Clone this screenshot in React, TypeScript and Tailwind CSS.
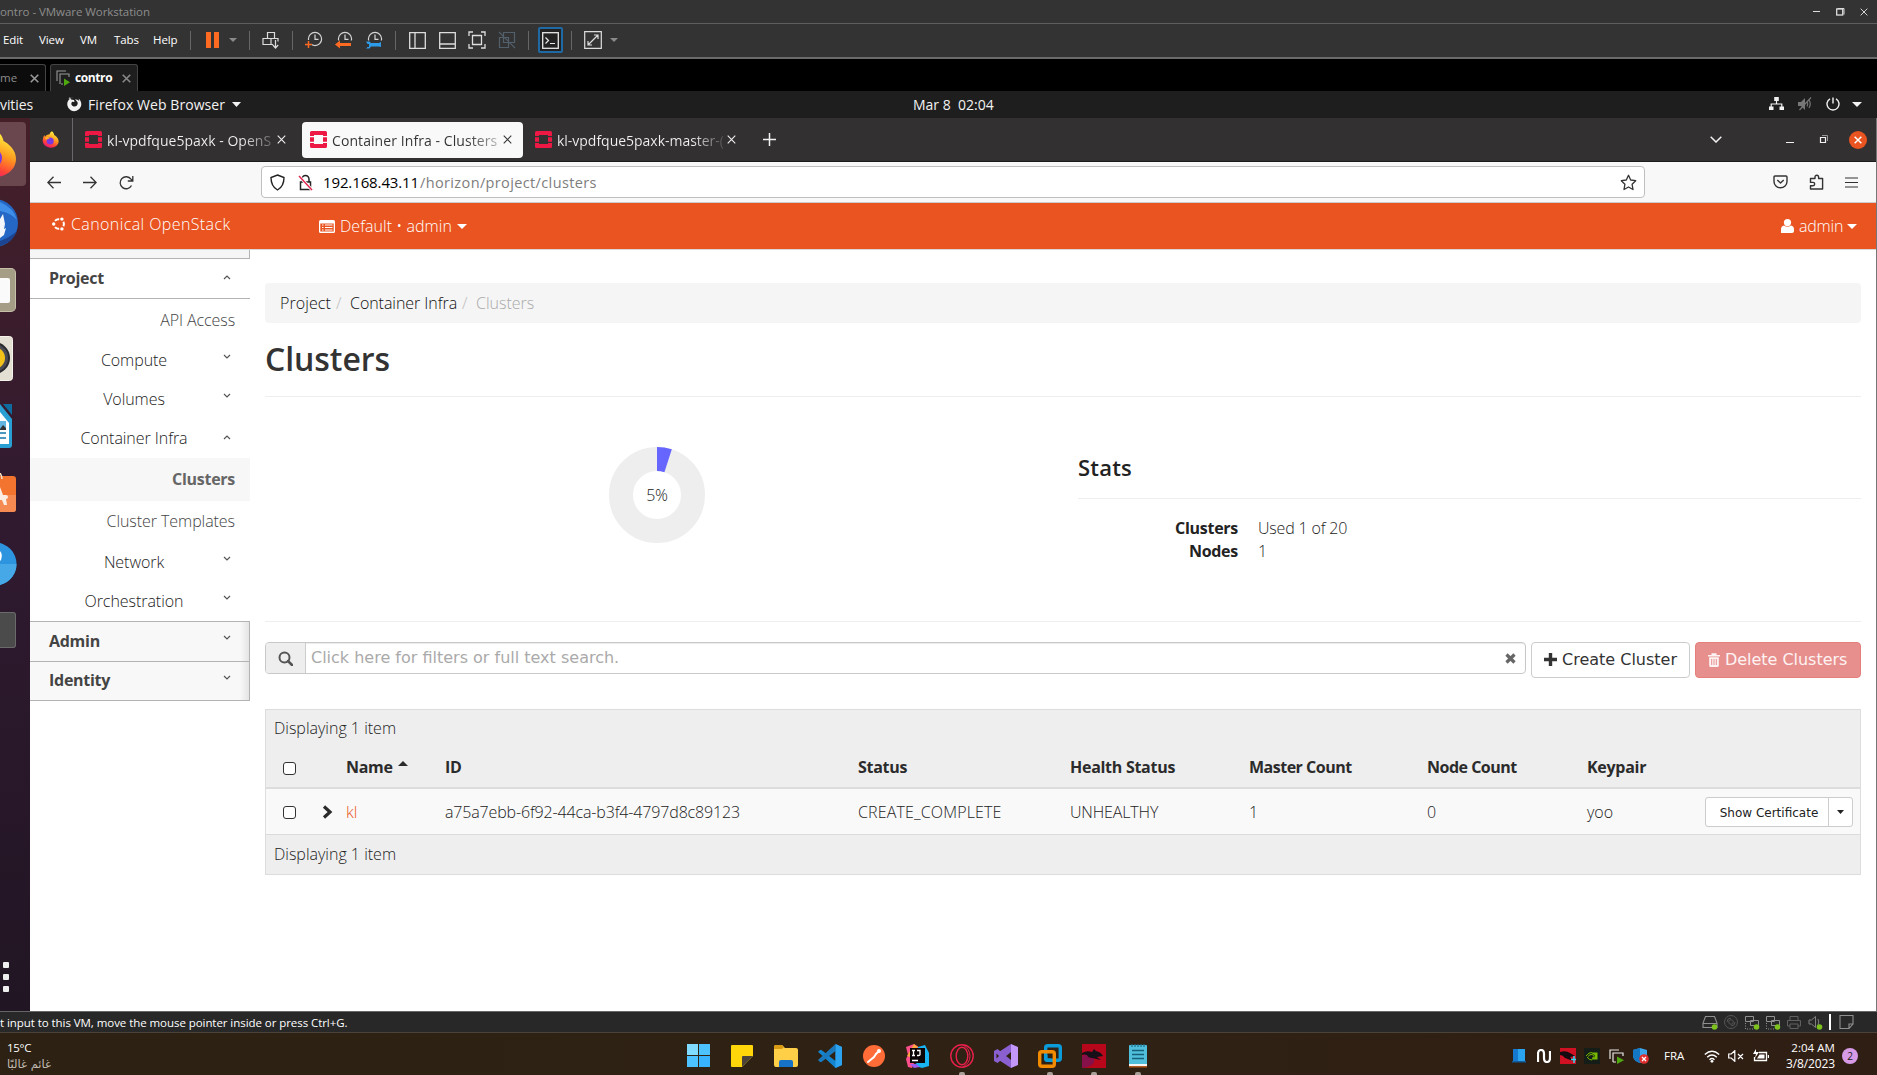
import React from "react";

type P = { children?: React.ReactNode; className?: string };

const Svg = ({ w = 18, h = w, vb, className = "", children }: P & { w?: number; h?: number; vb?: string }) => (
  <svg width={w} height={h} viewBox={vb ?? `0 0 ${w} ${h}`} fill="none" className={"block shrink-0 " + className}>
    {children}
  </svg>
);

const Sep = ({ className = "" }: P) => <div className={"h-[19px] w-px shrink-0 bg-[#666] " + className} />;

const Cell = ({ className = "", children }: P) => (
  <div className={"flex shrink-0 items-center justify-center " + className}>{children}</div>
);

const Caret = ({ w = 8, h = 4, className = "" }: { w?: number; h?: number; className?: string }) => (
  <svg width={w} height={h} viewBox="0 0 8 4" preserveAspectRatio="none" className={"block shrink-0 " + className}>
    <path d="M0 0h8L4 4z" fill="currentColor" />
  </svg>
);

const Close = ({ w = 9, sw = 1.2, className = "" }: { w?: number; sw?: number; className?: string }) => (
  <svg width={w} height={w} viewBox="0 0 10 10" className={"block shrink-0 " + className}>
    <path d="M.8.8l8.4 8.4M9.2.8L.8 9.2" stroke="currentColor" strokeWidth={sw} />
  </svg>
);

const Clock = ({ children }: P) => (
  <Svg w={18} h={18}>
    <circle cx="10" cy="8" r="6.6" stroke="#d6d6d6" strokeWidth="1.2" />
    <path d="M10 3.5V8.3h3.5" stroke="#d6d6d6" strokeWidth="1.2" />
    {children}
  </Svg>
);

function TitleBar() {
  return (
    <div className="flex h-[24px] items-center border-b border-[#5e5e5e] bg-[#333]">
      <span className="w-[1802px] shrink-0 text-[11.5px] tracking-[-0.05px] text-[#8d8d8d]">ontro - VMware Workstation</span>
      <Cell className="w-[28px]"><div className="h-px w-[7px] bg-[#ddd]" /></Cell>
      <Cell className="w-[20px]">
        <Svg w={9}><path d="M1.5 1.5h6.5v6" stroke="#ddd" /><rect x=".7" y="2" width="6" height="6" stroke="#ddd" strokeWidth="1.3" /></Svg>
      </Cell>
      <Cell className="w-[28px]"><Close w={8} className="text-[#ddd]" /></Cell>
    </div>
  );
}

function MenuBar() {
  return (
    <div className="flex h-[35px] items-center border-b-2 border-[#6b6b6b] bg-[#333] pb-px">
      <div className="flex w-[190px] shrink-0 text-[11.5px] tracking-[-0.1px] text-white">
        <span className="w-[36px] pl-[3px]">Edit</span>
        <span className="w-[41px] pl-[3px]">View</span>
        <span className="w-[34px] pl-[3px]">VM</span>
        <span className="w-[39px] pl-[3px]">Tabs</span>
        <span className="pl-[3px]">Help</span>
      </div>
      <Sep />
      <Cell className="w-[42px]"><div className="flex gap-[3px]"><div className="h-[16px] w-[5px] bg-[#fd6a22]" /><div className="h-[16px] w-[5px] bg-[#fd6a22]" /></div></Cell>
      <Cell className="w-[16px] pr-[16px]"><Caret className="text-[#8a8a8a]" /></Cell>
      <Sep />
      <Cell className="w-[42px]">
        <Svg w={18}><path d="M5.500 1.500h7v6h-7zM1 7.500h8v6H1zM9 7.500h7v3M9 13.500h2" stroke="#ddd" strokeWidth="1.200" /><path d="M13.500 9v8M10.800 14l2.700 3 2.700-3" stroke="#ddd" strokeWidth="1.200" /></Svg>
      </Cell>
      <Sep />
      <Cell className="w-[42px]"><Clock><rect x="0" y="9" width="7" height="9" fill="#333" /><path d="M3.500 10v7M0 13.500h7" stroke="#fd6a22" strokeWidth="1.500" /></Clock></Cell>
      <Cell className="w-[18px]"><Clock><rect x="0" y="9.500" width="18" height="9" fill="#333" /><path d="M0 13.500l5-4v2.500h11v3H5v2.500z" fill="#fd6a22" /></Clock></Cell>
      <Cell className="w-[42px]"><Clock><rect x="0" y="9.500" width="18" height="9" fill="#333" /><path d="M1 10.500h3.500L6 12h8l2-1v5l-2-.5H6L4.500 17.500H1l1.500-1.500h1.500v-3H2.500z" fill="#2d9be8" /></Clock></Cell>
      <Sep />
      <Cell className="w-[42px]"><Svg w={17}><path d="M.7.7h15.600v15.600H.7zM6 .7v15.600" stroke="#ddd" strokeWidth="1.300" /></Svg></Cell>
      <Cell className="w-[18px]"><Svg w={17}><path d="M.7.7h15.600v15.600H.7zM.7 12h15.600" stroke="#ddd" strokeWidth="1.300" /></Svg></Cell>
      <Cell className="w-[42px]"><Svg w={18}><path d="M1 5V1h4M13 1h4v4M17 13v4h-4M5 17H1v-4M4.500 4.500h9v9h-9z" stroke="#ddd" strokeWidth="1.300" /></Svg></Cell>
      <Cell className="w-[18px]"><Svg w={18}><path d="M5.500 1.500h11v10h-11zM1.500 6.500h9v10h-9zM1 1l16 16" stroke="#52606b" strokeWidth="1.200" /></Svg></Cell>
      <div className="w-[12px] shrink-0" />
      <Sep />
      <Cell className="w-[42px]">
        <div className="flex h-[26px] w-[25px] items-center justify-center rounded-[2px] border-2 border-[#1f6aa5] bg-[#222]">
          <Svg w={17}><rect x=".7" y=".7" width="15.600" height="15.600" stroke="#e8e8e8" strokeWidth="1.300" /><path d="M3.500 5.500l3 3-3 3M8 11.500h5" stroke="#e8e8e8" strokeWidth="1.200" /></Svg>
        </div>
      </Cell>
      <Sep />
      <Cell className="w-[42px]"><Svg w={18}><path d="M.7.7h16.600v16.600H.7zM4 14L14 4M10 4h4v4M4 10v4h4" stroke="#ddd" strokeWidth="1.200" /></Svg></Cell>
      <Caret className="ml-[-4px] text-[#8a8a8a]" />
    </div>
  );
}

function VmTabs() {
  return (
    <div className="flex h-[32px] items-end bg-black">
      <div className="flex h-[27px] w-[46px] shrink-0 items-center justify-between rounded-tr-[3px] border-t border-r border-[#444] bg-[#0c0c0c] pr-[6px]">
        <span className="text-[11.5px] text-[#8d8d8d]">me</span>
        <Close w={9} sw={1.8} className="text-[#999]" />
      </div>
      <div className="ml-[4px] flex h-[27px] w-[88px] shrink-0 items-center rounded-t-[3px] border border-b-0 border-[#444] bg-[#1e1e1e] pl-[5px]">
        <Svg w={15} h={16}><path d="M1 11V1h9M4 14V4h9v3M5 14h2" stroke="#999" strokeWidth="1.100" /><path d="M8 8.500l6 3.700-6 3.700z" fill="#4ea80f" /></Svg>
        <span className="ml-[4px] w-[47px] text-[12px] font-bold tracking-[-0.4px] text-white">contro</span>
        <Close w={9} sw={1.8} className="text-[#888]" />
      </div>
    </div>
  );
}

function GnomeBar() {
  return (
    <div className="flex h-[27px] items-center bg-[#1e1e1e] pb-px text-[14px] text-[#f2f2f2]">
      <span className="w-[66px] shrink-0 tracking-[-0.1px]">vities</span>
      <Svg w={16} h={16}>
        <path d="M8 1.200A7 7 0 1 0 14.500 5c-.4-1.200-1.200-2-2-2.500.5 1 .7 1.800.7 2.600C12 3.500 10.500 3.600 9 3.300L11 5.500c1 1 1 3-.3 4.200-1.500 1.300-4 1-5-.7-.7-1.300-.3-2.600.6-3.300L8.500 6 8 4 5 3.500 4 1 2.500 3z" fill="#f2f2f2" />
      </Svg>
      <span className="ml-[6px] w-[144px] shrink-0 tracking-[0.07px]">Firefox Web Browser</span>
      <Caret w={9} h={5} />
      <span className="ml-[672px] w-[856px] shrink-0 whitespace-pre text-[14px]">Mar 8  02:04</span>
      <Svg w={15} h={14}><path d="M5.200 0h4.600v4H5.200zM0 9.500h4.500V13H0zM10.500 9.500H15V13h-4.500z" fill="#f2f2f2" /><path d="M7.500 4v3M2.200 10V7h10.600v3" stroke="#f2f2f2" strokeWidth="1.200" /></Svg>
      <Svg w={15} h={14} className="ml-[14px]"><path d="M0 5h3l4-4v12L3 9H0z" fill="#777" /><path d="M9 4.500q1.500 2.500 0 5M11 3q2.500 4 0 8M1.500 13L13 .5" stroke="#777" strokeWidth="1.200" /></Svg>
      <Svg w={14} h={14} className="ml-[13px]"><path d="M7 .5v6M4 1.800a6 6 0 1 0 6 0" stroke="#f2f2f2" strokeWidth="1.400" /></Svg>
      <Caret w={10} h={5} className="ml-[12px]" />
    </div>
  );
}

const OpenStack = () => (
  <Svg w={17} h={17}>
    <path d="M0 1.500Q0 0 1.500 0h14Q17 0 17 1.500V5h-4V4H4v1H0zM0 12h4v1h9v-1h4v3.500q0 1.500-1.500 1.500h-14Q0 17 0 15.500z" fill="#ed1944" />
    <path d="M0 6.200h4v4.600H0zM13 6.200h4v4.600h-4z" fill="#ed1944" />
  </Svg>
);

const Firefox = ({ s, className = "" }: { s: number; className?: string }) => (
  <svg width={s} height={s} viewBox="0 0 48 48" className={"block shrink-0 " + className}>
    <defs>
      <linearGradient id="flame" x1="0.75" y1="0" x2="0.3" y2="1">
        <stop offset="0.1" stopColor="#ffe83d" />
        <stop offset="0.45" stopColor="#ff9a1f" />
        <stop offset="0.75" stopColor="#ff4139" />
        <stop offset="1" stopColor="#e8117f" />
      </linearGradient>
    </defs>
    <path d="M28 1c4 3 6 7 6.500 10C40 14 47 20 47 29c0 10-9 18-22 18S2 38 2 27C2 20 4 15 7 11c0 2 1 4 2 5 3-5 7-6 12-6 1-4 4-7 7-9z" fill="url(#flame)" />
    <circle cx="23" cy="28" r="10" fill="#7a38e0" />
    <path d="M9 18c5-2 10 0 13 3-6 0-7 3-9 4-3-1-4-4-4-7z" fill="#ffb02a" />
  </svg>
);

function FirefoxTabs() {
  return (
    <div className="flex h-[44px] items-center border-b border-[#1c1b1c] bg-[#333032] text-[14px] text-[#f2f2f2]">
      <Cell className="h-full w-[43px] border-r border-[#6a686a]"><Firefox s={17} className="mr-[2px]" /></Cell>
      <div className="flex w-[229px] shrink-0 items-center pl-[12px]">
        <OpenStack />
        <span className="mt-px ml-[5px] w-[168px] whitespace-nowrap bg-gradient-to-r from-[#f2f2f2] from-80% to-[#5a5759] bg-clip-text tracking-[0.02px] text-transparent">kl-vpdfque5paxk - OpenS</span>
        <Close w={9} className="ml-[2px]" />
      </div>
      <div className="flex h-[36px] w-[221px] shrink-0 items-center rounded-[4px] bg-[#f9f9fa] pl-[8px] text-[#333]">
        <OpenStack />
        <span className="mt-px ml-[5px] w-[167px] whitespace-nowrap bg-gradient-to-r from-[#333] from-80% to-[#bbb] bg-clip-text tracking-[0.08px] text-transparent">Container Infra - Clusters</span>
        <Close w={9} className="ml-[4px]" />
      </div>
      <div className="flex w-[230px] shrink-0 items-center pl-[12px]">
        <OpenStack />
        <span className="mt-px ml-[5px] w-[170px] whitespace-nowrap bg-gradient-to-r from-[#f2f2f2] from-80% to-[#403d3f] bg-clip-text tracking-[-0.02px] text-transparent">kl-vpdfque5paxk-master-(</span>
        <Close w={9} />
      </div>
      <Svg w={13} className="ml-[10px]"><path d="M6.500 0v13M0 6.500h13" stroke="#f2f2f2" strokeWidth="1.500" /></Svg>
      <Svg w={12} h={7} className="ml-[934px]"><path d="M.7.700L6 6 11.300.7" stroke="#f2f2f2" strokeWidth="1.500" /></Svg>
      <div className="mt-[6px] ml-[64px] h-px w-[8px] bg-[#f2f2f2]" />
      <Svg w={9} className="ml-[25px]"><path d="M1.500 2.500h5v5h-5z" stroke="#f2f2f2" strokeWidth="1.200" /><path d="M3 .5h5.500V6" stroke="#999" /></Svg>
      <div className="ml-[21px] flex h-[18px] w-[18px] items-center justify-center rounded-full bg-[#e95420]"><Close w={8} sw={1.800} className="text-white" /></div>
    </div>
  );
}

function UrlBar() {
  return (
    <div className="flex h-[41px] items-center border-b border-[#ccc] bg-[#f8f8f8] text-[#333]">
      <Svg w={14} h={13} className="ml-[17px]"><path d="M14 6.500H1M6.500.8L.8 6.500l5.700 5.700" stroke="#333" strokeWidth="1.300" /></Svg>
      <Svg w={14} h={13} className="ml-[22px]"><path d="M0 6.500h13M7.500.8l5.700 5.700-5.700 5.700" stroke="#333" strokeWidth="1.300" /></Svg>
      <Svg w={15} h={15} className="ml-[22px]"><path d="M12.500 10.500A6 6 0 1 1 12 4.200L13.500 6M13.800 1v5h-5" stroke="#333" strokeWidth="1.300" /></Svg>
      <div className="ml-[127px] flex h-[32px] w-[1384px] shrink-0 items-center rounded-[4px] border border-[#bfbfbf] bg-white pl-[8px]">
        <Svg w={15} h={17}><path d="M7.500 1l6.500 2.500c0 6-2 10-6.500 12.500C3 13.500 1 9.500 1 3.500z" stroke="#222" strokeWidth="1.400" /></Svg>
        <Svg w={15} h={17} className="ml-[13px]"><path d="M4 8V5a3.500 3.500 0 0 1 7 0v3M2.500 8h10v7.500h-10z" stroke="#222" strokeWidth="1.500" /><path d="M1 2l13 14" stroke="#fff" strokeWidth="3" /><path d="M1 2l13 14" stroke="#e22850" strokeWidth="1.500" /></Svg>
        <span className="mt-px ml-[10px] w-[97px] text-[15px] tracking-[-0.12px] text-black">192.168.43.11</span>
        <span className="mt-px w-[1200px] text-[14.500px] tracking-[0.37px] text-[#7d7d7d]">/horizon/project/clusters</span>
        <Svg w={17} h={17}><path d="M8.500 1.300l2.200 4.700 5 .7-3.600 3.600.9 5.200-4.500-2.500L4 15.500l.9-5.200L1.300 6.700l5-.7z" stroke="#333" strokeWidth="1.300" strokeLinejoin="round" /></Svg>
      </div>
      <Svg w={15} h={14} className="ml-[128px]"><path d="M2 1h11q1 0 1 1v4.500a6.500 6.300 0 0 1-13 0V2q0-1 1-1zM4.300 5L7.500 8l3.200-3" stroke="#333" strokeWidth="1.400" strokeLinejoin="round" /></Svg>
      <Svg w={15} h={16} className="ml-[21px]"><path d="M1.500 4.500H6V3a1.800 1.800 0 0 1 3.600 0v1.500h4V15H1.500v-3.200H4a1.700 1.700 0 0 0 0-3.400H1.500z" stroke="#333" strokeWidth="1.400" strokeLinejoin="round" /></Svg>
      <Svg w={13} h={11} className="ml-[21px]"><path d="M0 1h13M0 5.500h13M0 10h13" stroke="#333" strokeWidth="1.200" /></Svg>
    </div>
  );
}

function HorizonHeader() {
  return (
    <div className="flex h-[47px] items-center border-b border-[#d8d8d8] bg-[#e95420] text-[16px] font-light text-white">
      <Svg w={14} h={14} className="mt-[-4px] ml-[22px]">
        <path d="M3 3.800A5 5 0 0 1 7.200 2.200M11.400 4.800a5 5 0 0 1 0 4.400M7.200 11.800A5 5 0 0 1 3 10.200" stroke="#fff" strokeWidth="2" />
        <circle cx="9.900" cy="2.100" r="1.700" fill="#fff" /><circle cx="1.700" cy="7" r="1.700" fill="#fff" /><circle cx="9.900" cy="11.900" r="1.700" fill="#fff" />
      </Svg>
      <span className="mt-[-4px] ml-[5px] w-[248px] shrink-0 tracking-[0.4px]">Canonical OpenStack</span>
      <Svg w={16} h={13}><path d="M1.500 0h13Q16 0 16 1.500v10q0 1.500-1.500 1.500h-13Q0 13 0 11.500v-10Q0 0 1.500 0zM1.300 3.500v8h13.400v-8z" fill="#fff" fillRule="evenodd" /><path d="M3 5h1.500M6 5h7.500M3 7.500h1.500M6 7.500h7.500M3 10h1.500M6 10h7.500" stroke="#fff" strokeWidth="1.200" /></Svg>
      <span className="ml-[5px] w-[117px] shrink-0 tracking-[0.04px]">Default • admin</span>
      <Caret w={10} h={5} />
      <Svg w={13} h={14} className="ml-[1314px]"><circle cx="6.500" cy="3.600" r="3.600" fill="#fff" /><path d="M0 14v-3.500Q0 7 3 6.500q3.500 2.500 7 0 3 .5 3 4V12q0 2-2 2z" fill="#fff" /></Svg>
      <span className="ml-[5px] w-[48px] shrink-0 tracking-[-0.2px]">admin</span>
      <Caret w={10} h={5} />
    </div>
  );
}

const Chevron = ({ up = false }: { up?: boolean }) => (
  <svg width="8" height="5" viewBox="0 0 8 5" fill="none" className="block shrink-0">
    <path d={up ? "M1 4l3-3 3 3" : "M1 1l3 3 3-3"} stroke="#555" strokeWidth="1.200" />
  </svg>
);

function Group({ label, up, className = "h-[40px]" }: { label: string; up?: boolean; className?: string }) {
  return (
    <div className={"flex items-center justify-between border-b border-[#b3b3b3] pl-[19px] text-[16px] font-bold tracking-[-0.27px] text-[#444] " + className + (up ? " bg-white pr-[19px]" : " border-r bg-[#f8f8f8] bg-gradient-to-l from-[#e4e4e4] via-[#f8f8f8] via-4% to-[#f8f8f8] pr-[18px]")}>
      <span className="pb-[2px]">{label}</span>
      <span className={up ? "mt-[-2px]" : "mt-[-8px]"}><Chevron up={up} /></span>
    </div>
  );
}

function SubGroup({ label, up }: { label: string; up?: boolean }) {
  return (
    <div className="flex h-[39px] items-center pr-[19px] text-[16px] font-light text-[#222]">
      <span className="w-[193px] pb-[2px] pl-[15px] text-center tracking-[-0.05px]">{label}</span>
      <span className={up ? "mt-[-2px]" : "mt-[-8px]"}><Chevron up={up} /></span>
    </div>
  );
}

function Sidebar() {
  return (
    <div className="w-[220px] shrink-0">
      <div className="h-[9px] border-r border-b border-[#b3b3b3] bg-[#f5f5f5]" />
      <Group label="Project" up />
      <div className="flex h-[42px] items-center justify-end pr-[15px] text-[16px] font-light tracking-[-0.1px] text-[#444]">API Access</div>
      <SubGroup label="Compute" />
      <SubGroup label="Volumes" />
      <SubGroup label="Container Infra" up />
      <div className="flex h-[43px] items-center justify-end bg-[#f7f7f7] pr-[15px] pb-[2px] text-[16px] font-bold tracking-[-0.27px] text-[#666]">Clusters</div>
      <div className="flex h-[42px] items-center justify-end pr-[15px] pb-[2px] text-[16px] font-light tracking-[-0.06px] text-[#444]">Cluster Templates</div>
      <SubGroup label="Network" />
      <SubGroup label="Orchestration" />
      <div className="border-t border-[#b3b3b3]">
        <Group label="Admin" />
        <Group label="Identity" className="h-[39px]" />
      </div>
    </div>
  );
}

const cols = "grid grid-cols-[80px_99px_413px_212px_179px_178px_160px_1fr]";

const Box = () => <span className="block h-[13px] w-[13px] rounded-[3px] border-[1.500px] border-[#333] bg-white" />;

function Table() {
  return (
    <div className="mt-[31px] border border-[#ddd] bg-[#eee] text-[16px] font-light text-[#222]">
      <div className="flex h-[38px] items-center pb-[2px] pl-[8px]">Displaying 1 item</div>
      <div className={cols + " h-[41px] items-center border-b-2 border-[#dcdcdc] pb-px font-bold tracking-[-0.28px] text-[#2b2b2b]"}>
        <span className="pt-[3px] pl-[17px]"><Box /></span>
        <span className="flex items-center gap-[5px]">Name <svg width="10" height="5" viewBox="0 0 10 5" className="mt-[-7px]"><path d="M0 5h10L5 0z" fill="#2b2b2b" /></svg></span>
        <span>ID</span>
        <span>Status</span>
        <span>Health Status</span>
        <span className="tracking-[-0.5px]">Master Count</span>
        <span className="tracking-[-0.5px]">Node Count</span>
        <span>Keypair</span>
      </div>
      <div className={cols + " h-[46px] items-center border-b border-[#dcdcdc] bg-[#f9f9f9]"}>
        <span className="flex items-center gap-[26px] pl-[17px]">
          <span className="mt-[2px]"><Box /></span>
          <Svg w={11} h={14}><path d="M2 1.500L8 7l-6 5.500" stroke="#2b2b2b" strokeWidth="3.200" /></Svg>
        </span>
        <span className="text-[#e95420]">kl</span>
        <span className="tracking-[-0.15px]">a75a7ebb-6f92-44ca-b3f4-4797d8c89123</span>
        <span className="tracking-[0.15px]">CREATE_COMPLETE</span>
        <span className="tracking-[-0.15px]">UNHEALTHY</span>
        <span>1</span>
        <span>0</span>
        <span className="flex items-center">yoo</span>
      </div>
      <div className="flex h-[39px] items-center pb-[2px] pl-[8px]">Displaying 1 item</div>
    </div>
  );
}

function Main() {
  return (
    <div className="ml-[15px] w-[1596px] shrink-0 pt-[33px] text-[16px] font-light text-[#222]">
      <div className="flex h-[40px] items-center rounded-[4px] bg-[#f5f5f5] pl-[15px]">
        <span className="w-[56px] tracking-[0.1px] text-[#111]">Project</span>
        <span className="w-[14px] text-[#bbb]">/</span>
        <span className="w-[112px] tracking-[-0.05px] text-[#111]">Container Infra</span>
        <span className="w-[14px] text-[#bbb]">/</span>
        <span className="text-[#aaa]">Clusters</span>
      </div>
      <div className="flex h-[74px] items-center border-b border-[#eee] pb-[2px]">
        <h1 className="text-[32px] font-semibold tracking-[-0.06px] text-[#333]">Clusters</h1>
      </div>
      <div className="flex h-[225px] border-b border-[#eee]">
        <div className="w-[813px] shrink-0 pt-[50px] pl-[343px]">
          <div className="grid h-[96px] w-[98px] place-items-center">
            <Svg w={96} className="col-start-1 row-start-1">
              <circle cx="48" cy="48" r="36" stroke="#eee" strokeWidth="24" />
              <path d="M48 0A48 48 0 0 1 62.830 2.350L55.420 25.170A24 24 0 0 0 48 24z" fill="#66f" />
            </Svg>
            <span className="col-start-1 row-start-1 text-[16px] tracking-[-0.2px]">5%</span>
          </div>
        </div>
        <div className="flex-1 pt-[43px]">
          <div className="flex h-[59px] items-center border-b border-[#eee] pb-[4px] text-[22px] font-semibold tracking-[0.2px]">Stats</div>
          <div className="grid grid-cols-[160px_1fr] gap-x-[20px] pt-[18px] leading-[23px]">
            <span className="text-right font-bold tracking-[-0.27px]">Clusters</span>
            <span className="tracking-[-0.18px]">Used 1 of 20</span>
            <span className="text-right font-bold tracking-[-0.27px]">Nodes</span>
            <span>1</span>
          </div>
        </div>
      </div>
      <div className="mt-[20px] flex h-[36px] items-start font-['DejaVu_Sans',sans-serif] font-normal text-[#333]">
        <div className="flex h-[32px] w-[1261px] shrink-0 items-center overflow-hidden rounded-[4px] border border-[#c8c8c8] bg-white shadow-[inset_0_1px_1px_rgba(0,0,0,.08)]">
          <div className="flex h-full w-[40px] shrink-0 items-center justify-center border-r border-[#ccc] bg-[#eee]">
            <Svg w={15} h={15}><circle cx="6.500" cy="6.500" r="5" stroke="#555" strokeWidth="2" /><path d="M10 10l4 4" stroke="#555" strokeWidth="2.500" strokeLinecap="round" /></Svg>
          </div>
          <span className="w-[1199px] shrink-0 pl-[5px] text-[16px] text-[#aaa]">Click here for filters or full text search.</span>
          <Svg w={11} h={11}><path d="M1.500 1.500l8 8M9.500 1.500l-8 8" stroke="#666" strokeWidth="3.200" /></Svg>
        </div>
        <div className="ml-[5px] flex h-[36px] w-[159px] shrink-0 items-center rounded-[4px] border border-[#ccc] bg-white pl-[12px] text-[#333]">
          <Svg w={13} className="mt-[-2px]"><path d="M6.500 0v13M0 6.500h13" stroke="#333" strokeWidth="3.400" /></Svg>
          <span className="ml-[5px] whitespace-nowrap pb-px">Create Cluster</span>
        </div>
        <div className="ml-[5px] flex h-[36px] w-[166px] shrink-0 items-center rounded-[4px] border border-[#e57f7c] bg-[#e78f8d] pl-[12px] text-[#fdf3f3]">
          <Svg w={12} h={14}><path d="M0 2h12v1.500H0zM3.500 .3h5V2h-5zM1.200 4.200h9.600V12.500q0 1.500-1.500 1.500H2.700q-1.500 0-1.500-1.500z" fill="#fdf3f3" /><path d="M3.700 6v6M6 6v6M8.300 6v6" stroke="#e78f8d" strokeWidth="1" /></Svg>
          <span className="ml-[5px] whitespace-nowrap pb-px tracking-[-0.03px]">Delete Clusters</span>
        </div>
      </div>
      <div className="relative">
        <Table />
        <div className="absolute top-[88px] right-[8px] flex h-[30px] w-[148px] rounded-[3px] border border-[#ccc] bg-white font-['DejaVu_Sans',sans-serif] text-[12px] font-normal">
          <span className="flex w-[123px] items-center justify-center border-r border-[#ccc] pt-px pl-[4px]">Show Certificate</span>
          <span className="flex flex-1 items-center justify-center"><Caret w={7} h={4} /></span>
        </div>
      </div>
    </div>
  );
}

const DockCell = ({ className = "", children }: P) => <div className={"flex shrink-0 items-center overflow-hidden " + className}>{children}</div>;

function Dock() {
  return (
    <div className="flex w-[30px] shrink-0 flex-col overflow-hidden bg-gradient-to-b from-[#451f28] via-[#301a30] via-45% to-[#211523]">
      <DockCell className="mt-[4px] h-[64px] w-[26px] rounded-r-[4px] bg-[#6a474f]"><Firefox s={48} className="ml-[-31px]" /></DockCell>
      <DockCell className="mt-[12px] h-[50px]">
        <Svg w={20} h={48}><circle cx="-6" cy="24" r="24" fill="#2467c4" /><path d="M0 3q14 6 17 18-6-7-17-9z" fill="#3f8fe8" /><path d="M0 20l3-5 1 5 1 5-1 5 2-1-2 7-4 3z" fill="#f3f6fa" /><path d="M17 32q-5 12-17 15v-5q9-3 17-10z" fill="#1c4490" /></Svg>
      </DockCell>
      <DockCell className="mt-[20px] h-[44px]"><div className="flex h-[44px] w-[16px] items-center rounded-r-[5px] border border-l-0 border-[#c6bfa9] bg-[#a59d86]"><div className="h-[25px] w-[10px] rounded-r-[2px] bg-[#fafafa]" /></div></DockCell>
      <DockCell className="mt-[24px] h-[45px]">
        <Svg w={14} h={45}><rect x="-20" y=".5" width="32.500" height="44" rx="3" fill="#e3dfd3" stroke="#f5f3ec" /><circle cx="-6" cy="22" r="16" fill="#29292e" /><circle cx="-6" cy="22" r="14" fill="#4a4a55" /><circle cx="-6" cy="22" r="11" fill="#f2c218" /></Svg>
      </DockCell>
      <DockCell className="mt-[23px] h-[45px]">
        <Svg w={14} h={45}><path d="M0 0l12 15v26q0 3-3 3H0z" fill="#2a9fd4" /><path d="M3 0h9v11z" fill="#0e6c9e" /><path d="M0 8l9 11v21H0z" fill="#fff" /><path d="M0 17h6v9H0z" fill="#62b5e0" /><path d="M0 25l3-4 3 3v2H0z" fill="#333" /><path d="M0 29h6M0 34h6" stroke="#1176a8" strokeWidth="1.500" /></Svg>
      </DockCell>
      <DockCell className="mt-[24px] h-[42px]">
        <Svg w={17} h={42}><path d="M0 3h13q3 0 3 3v30q0 3-3 3H0z" fill="#f3742f" /><path d="M0 22h16v14q0 3-3 3H0z" fill="#f58a52" /><path d="M0 0q2 3 2 6" stroke="#fbe3c8" strokeWidth="1.500" /><path d="M0 14l3 8h3q2 0 2 2t-2 2l1 6H4l-2-5H0z" fill="#fdeee4" /></Svg>
      </DockCell>
      <DockCell className="mt-[27px] h-[44px]"><Svg w={17} h={44}><circle cx="-5" cy="22" r="21.500" fill="#2d94df" /><path d="M0 22h16.500a21.500 21.500 0 0 1-16.500 21z" fill="#47a8e8" /><path d="M0 9q3 3 1 9l-1 1z" fill="#fff" /></Svg></DockCell>
      <DockCell className="mt-[26px] h-[36px]"><div className="h-[36px] w-[16px] rounded-r-[3px] border border-l-0 border-[#6b6b6b] bg-[#4b4b4b]" /></DockCell>
      <div className="mt-auto mb-[19px] ml-[3px] flex flex-col gap-[6px]">
        <i className="block h-[6px] w-[6px] rounded-[1px] bg-[#eee]" />
        <i className="block h-[6px] w-[6px] rounded-[1px] bg-[#eee]" />
        <i className="block h-[6px] w-[6px] rounded-[1px] bg-[#eee]" />
      </div>
    </div>
  );
}

const Dot = ({ x, y }: { x: number; y: number }) => <circle cx={x} cy={y} r="2.800" fill="#7cc11c" />;

function StatusBar() {
  return (
    <div className="flex h-[22px] items-center border-t border-b border-t-[#666] border-b-[#4b423a] bg-[#282828]">
      <span className="w-[1702px] shrink-0 whitespace-nowrap pt-px text-[11.500px] tracking-[-0.06px] text-white">t input to this VM, move the mouse pointer inside or press Ctrl+G.</span>
      <div className="flex items-center gap-[5px]">
        <Svg w={16} h={16}><path d="M3.500 2.500h9L15 9v4.500H1V9zM1 9.500h14" stroke="#909090" strokeWidth="1.100" /><Dot x={12.500} y={13} /></Svg>
        <Svg w={16} h={16}><circle cx="8" cy="8" r="6.500" stroke="#555" /><circle cx="8" cy="8" r="2.300" stroke="#555" /><path d="M4 8a4 4 0 0 1 4-4M12 8a4 4 0 0 1-4 4" stroke="#555" /></Svg>
        <Svg w={16} h={16}><path d="M1.500 2.500h8v5h-8zM6.500 6.500h8v5h-8z" fill="#282828" stroke="#909090" /><path d="M1.500 9v6h8" stroke="#909090" strokeDasharray="1 1.500" /><Dot x={12.500} y={13} /></Svg>
        <Svg w={16} h={16}><path d="M1.500 2.500h8v5h-8zM6.500 6.500h8v5h-8z" fill="#282828" stroke="#909090" /><path d="M1.500 9v6h8" stroke="#909090" strokeDasharray="1 1.500" /><Dot x={12.500} y={13} /></Svg>
        <Svg w={16} h={16}><path d="M4 6V2.500h8V6M4 12H1.500V6.500h13V12H12M4 10h8v4.500H4z" stroke="#606060" /></Svg>
        <Svg w={16} h={16}><path d="M2 6h2.500l4-3.500v11L4.500 10H2zM11 5q1.500 3 0 6" stroke="#808080" /><Dot x={12.500} y={13} /></Svg>
      </div>
      <div className="ml-[6px] h-[16px] w-[2px] bg-white" />
      <Svg w={15} h={16} className="ml-[8px]"><path d="M1 1.500h13V10l-4 4.500H1zM14 10h-4v4.500" stroke="#909090" strokeWidth="1.100" /></Svg>
    </div>
  );
}

function TaskIcon({ children, run }: P & { run?: boolean }) {
  return (
    <div className="flex h-full w-[44px] shrink-0 flex-col items-center pt-[10px]">
      <div className="flex h-[25px] items-center">{children}</div>
      {run && <div className="mt-[4px] h-[3px] w-[6px] rounded-t-[2px] bg-[#a8a19a]" />}
    </div>
  );
}

function TaskBar() {
  return (
    <div className="flex h-[42px] bg-gradient-to-r from-[#2c2112] via-[#2f2214] to-[#2f1e13]">
      <div className="w-[676px] shrink-0 pt-[7px] pl-[7px] text-[11.500px] leading-[16px]">
        <div className="tracking-[-0.3px] text-white">15°C</div>
        <div className="font-['DejaVu_Sans',sans-serif] text-[11.500px] text-[#c4bdb6]"><span dir="rtl">غائم غالبًا</span></div>
      </div>
      <TaskIcon><Svg w={23}><path d="M0 0h11v11H0zM12 0h11v11H12zM0 12h11v11H0zM12 12h11v11H12z" fill="#4cc2ff" /><path d="M0 0h11v11H0z" fill="#7fdcff" /><path d="M12 12h11v11H12z" fill="#38b4ff" /></Svg></TaskIcon>
      <TaskIcon><Svg w={22}><path d="M0 1q0-1 1-1h20q1 0 1 1v10L11 22H1q-1 0-1-1z" fill="#ffd60a" /><path d="M22 11H12q-1 0-1 1v10z" fill="#4a4238" /></Svg></TaskIcon>
      <TaskIcon><Svg w={24} h={22}><path d="M0 2q0-2 2-2h6l3 3h11q2 0 2 2v15q0 2-2 2H2q-2 0-2-2z" fill="#ffcf48" /><path d="M0 4V2q0-2 2-2h6l2 2-2 2z" fill="#d99b14" /><path d="M5 22v-5q0-2 2-2h10q2 0 2 2v5z" fill="#1673c8" /></Svg></TaskIcon>
      <TaskIcon><Svg w={24}><path d="M17.500 0L24 3v18l-6.500 3L2 9.500 0 8l2-2h1.500L17.500 17z" fill="#1484d0" /><path d="M17.500 0v7L3.500 18H2l-2-2z" fill="#1a78bd" /><path d="M17.500 0L24 3v18l-6.500 3z" fill="#2ba3f0" /></Svg></TaskIcon>
      <TaskIcon><Svg w={22}><circle cx="11" cy="11" r="11" fill="#ff6c37" /><path d="M5 17l6-5 2-3 3-3" stroke="#fff" strokeWidth="2" strokeLinecap="round" /><circle cx="16" cy="6" r="2" fill="#fff" /></Svg></TaskIcon>
      <TaskIcon>
        <Svg w={24}><path d="M0 3l8-3 6 4-8 20-4-1L0 15l2-4z" fill="#fc4f8b" /><path d="M8 0l4 3-8 10-3-1z" fill="#ffa63d" /><path d="M12 3l7-2 4 8 0 13-7 2-6-2z" fill="#18b4f4" /><path d="M4 20l6 0 4 3-6 1z" fill="#9a5cf0" /><path d="M4 4h15v15H4z" fill="#0b0508" /><path d="M6 6.500h3M7.500 6.500v5M6 11.500h3M11 6.500h3v4q0 1-1.500 1H11M6 16.500h6" stroke="#fff" strokeWidth="1.300" /></Svg>
      </TaskIcon>
      <TaskIcon run><Svg w={24}><circle cx="12" cy="12" r="11.200" stroke="#e8204b" strokeWidth="1.400" /><ellipse cx="12" cy="12" rx="5.800" ry="8.800" stroke="#e8204b" strokeWidth="1.400" /><path d="M13 1q7 4 7 11t-7 11" stroke="#e8204b" /></Svg></TaskIcon>
      <TaskIcon><Svg w={24}><path d="M17 0v8L3.500 19 0 17V7l3.500-2L17 16v8L2.500 14.500v-5z" fill="#8a5fd0" /><path d="M2.500 9.500v5L5 12z" fill="#2f2214" /><path d="M17 0l7 3v18l-7 3z" fill="#c397f8" /></Svg></TaskIcon>
      <TaskIcon run><Svg w={24}><rect x="7.700" y="1.700" width="14.600" height="14.600" rx="2" stroke="#0c9bd9" strokeWidth="3.400" /><rect x="1.700" y="7.700" width="14.600" height="14.600" rx="2" stroke="#f38b00" strokeWidth="3.400" /><path d="M7.700 11v3.300q0 2 2 2H13" stroke="#0c9bd9" strokeWidth="3.400" /></Svg></TaskIcon>
      <TaskIcon run><Svg w={24}><path d="M0 0h24v24H0z" fill="#b8061b" /><path d="M0 12q10-4 12 3t-12 9z" fill="#85104a" /><path d="M0 9q5-3 10-1l2-3 2 2q5 1 7 5l-6 1 4 3-9-2q-4 0-5-3-3-1-5 0z" fill="#170f18" /></Svg></TaskIcon>
      <TaskIcon run><Svg w={18} h={24}><path d="M0 2q0-1 1-1h16q1 0 1 1v19H0z" fill="#50bfdc" /><path d="M0 20h18v2H0z" fill="#f5f5f5" /><path d="M0 22h18v1.500H0z" fill="#b25a1d" /><path d="M3 6.500h12M3 10.500h12M3 14.500h12" stroke="#155f78" strokeWidth="1.400" /><path d="M3 0v3M6 0v3M9 0v3M12 0v3M15 0v3" stroke="#1c6f8a" strokeWidth="1.200" /></Svg></TaskIcon>

      <div className="ml-[352px] flex h-full items-center pt-[4px] text-white">
        <Svg w={14} h={14}><path d="M1 0h12v12H1z" fill="#2aa4ef" /><path d="M1 0h5v12H1z" fill="#1579d0" /><path d="M0 12h14v1.500H0z" fill="#125c9e" /></Svg>
        <Svg w={14} h={14} className="ml-[11px]"><path d="M1 13V5q0-4 3-4t3 4v4q0 4 3 4t3-4V2" stroke="#fff" strokeWidth="2.200" /></Svg>
        <Svg w={16} h={16} className="ml-[9px]"><path d="M0 0h16v16H0z" fill="#d01123" /><path d="M0 4q6-2 10 1l5 3-5 1 3 4-8-3q-2-3-5-3z" fill="#130b10" /><path d="M14 8v7M11 11.500h5" stroke="#2fd7ef" strokeWidth="1.500" /></Svg>
        <Svg w={16} h={16} className="ml-[8px]"><path d="M0 0h16v16H0z" fill="#151d18" /><path d="M2 8q3-4 6-3.500M4 8.500q2-2.500 4-2t2 2-2 1.500M3 9q2 3 5 3" stroke="#76b900" strokeWidth="1" /><path d="M8 4.500h5.500v7H8v-1q3-1 3-2.500T8 5.500z" fill="#76b900" /></Svg>
        <Svg w={15} h={15} className="ml-[9px]"><path d="M1 10V1h9M4 13V4h10v3M4 13h3" stroke="#e8e8e8" strokeWidth="1.200" /><path d="M8 7.500l7 3.700-7 3.700z" fill="#4ea80f" /></Svg>
        <Svg w={16} h={16} className="ml-[9px]"><path d="M7 0l7 2v5q0 6-7 8-7-2-7-8V2z" fill="#3ba7ea" /><path d="M7 0v15q-7-2-7-8V2z" fill="#1377c4" /><circle cx="11" cy="11" r="4.800" fill="#e02f2f" /><path d="M9 9l4 4M13 9l-4 4" stroke="#fff" strokeWidth="1.300" /></Svg>
        <span className="ml-[15px] w-[40px] text-[11.500px]">FRA</span>
        <Svg w={16} h={13}><path d="M.8 4.500q7.200-6.500 14.400 0M3.200 7.200q4.800-4.500 9.600 0M5.500 9.700q2.500-2.200 5 0" stroke="#fff" strokeWidth="1.400" /><circle cx="8" cy="11.300" r="1.400" fill="#fff" /></Svg>
        <Svg w={16} h={12} className="ml-[8px]"><path d="M.7 4h2.500l3.600-3.300v10.600L3.200 8H.7zM10 4l5 5M15 4l-5 5" stroke="#fff" strokeWidth="1.200" /></Svg>
        <Svg w={17} h={14} className="ml-[8px]"><path d="M7 3.500h7.500v8h-12V8M16.500 6v3" stroke="#fff" strokeWidth="1.300" /><path d="M7.500 5.500h5v4H5z" fill="#fff" /><path d="M4 0L1 5h3l-1 4 4-6H4z" fill="#fff" /></Svg>
        <div className="ml-[9px] w-[57px] text-right text-[11.500px] leading-[16px]"><div className="tracking-[0.05px]">2:04 AM</div><div className="text-[12px] tracking-[-0.12px]">3/8/2023</div></div>
        <div className="ml-[7px] flex h-[16px] w-[16px] items-center justify-center rounded-full bg-[#d79ae6] text-[10px] text-[#222]">2</div>
      </div>
    </div>
  );
}

export default function App() {
  return (
    <div className="flex h-[1075px] w-[1877px] flex-col overflow-hidden bg-white font-['Open_Sans','Noto_Sans',sans-serif]">
      <TitleBar />
      <MenuBar />
      <VmTabs />
      <GnomeBar />
      <div className="flex h-[893px] border-r border-[#777]">
        <Dock />
        <div className="flex min-w-0 flex-1 flex-col overflow-hidden">
          <FirefoxTabs />
          <UrlBar />
          <HorizonHeader />
          <div className="flex flex-1 bg-white">
            <Sidebar />
            <Main />
          </div>
        </div>
      </div>
      <StatusBar />
      <TaskBar />
    </div>
  );
}
